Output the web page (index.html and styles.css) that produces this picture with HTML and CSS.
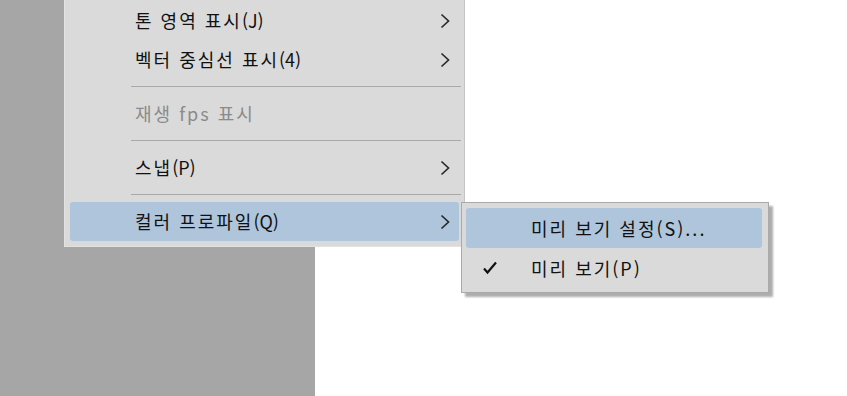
FILE: index.html
```html
<!DOCTYPE html>
<html lang="ko">
<head>
  <meta charset="UTF-8">
  <title>메뉴</title>
  <link rel="stylesheet" href="styles.css">
</head>
<body>
  <div class="workspace">
    <div class="side-panel"></div>
    <div class="canvas"></div>
  </div>

  <div class="menu main-menu">
    <div class="menu-item">
      <span class="label">톤 영역 표시<span class="latin">(J)</span></span>
      <svg class="arrow" viewBox="0 0 10 16"><path d="M1.5 1.5 L8.5 8 L1.5 14.5" /></svg>
    </div>
    <div class="menu-item">
      <span class="label">벡터 중심선 표시<span class="latin">(4)</span></span>
      <svg class="arrow" viewBox="0 0 10 16"><path d="M1.5 1.5 L8.5 8 L1.5 14.5" /></svg>
    </div>
    <div class="separator"></div>
    <div class="menu-item disabled">
      <span class="label">재생 fps 표시</span>
    </div>
    <div class="separator"></div>
    <div class="menu-item">
      <span class="label">스냅<span class="latin">(P)</span></span>
      <svg class="arrow" viewBox="0 0 10 16"><path d="M1.5 1.5 L8.5 8 L1.5 14.5" /></svg>
    </div>
    <div class="separator"></div>
    <div class="menu-item active">
      <span class="label">컬러 프로파일<span class="latin">(Q)</span></span>
      <svg class="arrow" viewBox="0 0 10 16"><path d="M1.5 1.5 L8.5 8 L1.5 14.5" /></svg>
    </div>
  </div>

  <div class="menu sub-menu">
    <div class="menu-item active">
      <span class="check"></span>
      <span class="label">미리 보기 설정(S)...</span>
    </div>
    <div class="menu-item">
      <span class="check">
        <svg viewBox="0 0 16 16"><path d="M2 8.5 L5.5 12.5 L14 2.5" /></svg>
      </span>
      <span class="label">미리 보기(P)</span>
    </div>
  </div>
</body>
</html>
```

FILE: styles.css
```css
* {
  margin: 0;
  padding: 0;
  box-sizing: border-box;
}

body {
  width: 847px;
  height: 396px;
  overflow: hidden;
  position: relative;
  font-family: "Noto Sans CJK KR", "Noto Sans", sans-serif;
  font-size: 18px;
  color: #111111;
}

.workspace {
  display: flex;
  height: 100%;
}

.side-panel {
  width: 315px;
  background: #a6a6a6;
}

.canvas {
  flex: 1;
  background: #ffffff;
}

/* 메뉴 공통 */
.menu {
  position: absolute;
  background: #dadada;
  border: 1px solid #c4c4c4;
}

.main-menu {
  left: 64px;
  top: -4px;
  width: 401px;
  padding: 4px 5px 5px 5px;
  border-left-color: #e2e2e2;
  border-bottom-color: #e2e2e2;
}

.sub-menu {
  left: 461px;
  top: 202px;
  width: 308px;
  padding: 5px 6px 4px 4px;
  border-color: #a9a9a9;
  box-shadow: 4px 4px 2px rgba(0, 0, 0, 0.32);
}

.menu-item {
  display: flex;
  align-items: center;
  height: 39px;
  padding-left: 65px;
  border-radius: 3px;
  letter-spacing: 2px;
  line-height: 1;
}

.menu-item .label {
  flex: 1;
  padding-bottom: 1px;
}

.main-menu .latin {
  letter-spacing: 0;
}

.menu-item.active {
  background: #aec5dc;
}

.menu-item.disabled {
  color: #8b8b8b;
}

.arrow {
  width: 10px;
  height: 16px;
  margin-right: 9px;
  fill: none;
  stroke: #2a2a2a;
  stroke-width: 1.7;
}

.separator {
  height: 15px;
  margin: 0 -2px 0 61px;
  position: relative;
}

.separator:after {
  content: '';
  position: absolute;
  left: 0;
  right: 0;
  top: 7px;
  height: 1px;
  background: #a9a9a9;
}

/* 하위 메뉴 */
.sub-menu .menu-item {
  height: 40px;
  padding-left: 0;
}

.check {
  width: 65px;
  display: flex;
  padding-left: 16px;
}

.check svg {
  width: 16px;
  height: 16px;
  fill: none;
  stroke: #111111;
  stroke-width: 2.2;
}
```
